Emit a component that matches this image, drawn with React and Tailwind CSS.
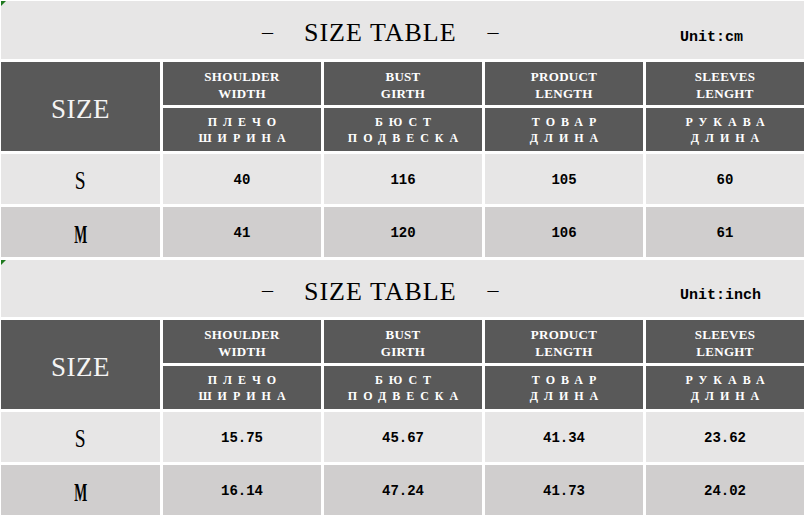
import React from "react";

const cols = [
  { en: ["SHOULDER", "WIDTH"], ru: ["ПЛЕЧО", "ШИРИНА"] },
  { en: ["BUST", "GIRTH"], ru: ["БЮСТ", "ПОДВЕСКА"] },
  { en: ["PRODUCT", "LENGTH"], ru: ["ТОВАР", "ДЛИНА"] },
  { en: ["SLEEVES", "LENGHT"], ru: ["РУКАВА", "ДЛИНА"] },
];

const tables = [
  { unit: "Unit:cm", h: "h-[58px]", s: ["40", "116", "105", "60"], m: ["41", "120", "106", "61"] },
  { unit: "Unit:inch", h: "h-[57px]", s: ["15.75", "45.67", "41.34", "23.62"], m: ["16.14", "47.24", "41.73", "24.02"] },
];

const mono = { fontFamily: '"Liberation Mono", monospace' };
const serif = { fontFamily: '"Liberation Serif", serif' };

function Title({ unit, h }) {
  return (
    <div className={`relative ${h} w-[803px] bg-[#e7e6e6] flex items-center`}>
      <span className="absolute left-0 top-0 w-0 h-0 border-t-[5px] border-r-[5px] border-t-[#1f7a1f] border-r-transparent" />
      <div className="w-[679px] flex items-center pl-[261px] pt-[6px] text-black" style={serif}>
        <span className="text-[22px] leading-none -mt-[3px]">–</span>
        <span className="ml-[31px] text-[26px] leading-none tracking-[1px]">SIZE TABLE</span>
        <span className="ml-[31px] text-[22px] leading-none -mt-[3px]">–</span>
      </div>
      <span className="mt-[14px] text-[15px] font-bold leading-none text-black" style={mono}>
        {unit}
      </span>
    </div>
  );
}

function Table({ t }) {
  return (
    <div className="grid grid-cols-[159px_158px_158px_158px_158px] grid-rows-[43px_43px_50px_50px] gap-[3px]">
      <div className="row-span-2 bg-[#595959] flex items-center justify-center">
        <span className="mt-[5px] text-[27px] leading-none tracking-[0.5px] text-[#f4f4f4]" style={serif}>
          SIZE
        </span>
      </div>
      {cols.map((c, i) => (
        <div key={"en" + i} className="bg-[#595959] flex flex-col items-center justify-center pt-[3px] text-white text-[13px] font-bold leading-[17.5px] tracking-[0.3px]" style={serif}>
          <span>{c.en[0]}</span>
          <span>{c.en[1]}</span>
        </div>
      ))}
      {cols.map((c, i) => (
        <div key={"ru" + i} className="bg-[#595959] flex flex-col items-center justify-center text-white text-[12px] font-bold leading-[16px] tracking-[6px] pl-[6px]" style={serif}>
          <span>{c.ru[0]}</span>
          <span>{c.ru[1]}</span>
        </div>
      ))}
      <div className="bg-[#e7e6e6] flex items-center justify-center">
        <span className="inline-block mt-[4px] text-[26px] leading-none text-black scale-x-[0.75]" style={serif}>S</span>
      </div>
      {t.s.map((v, i) => (
        <div key={"s" + i} className="bg-[#e7e6e6] flex items-center justify-center pt-[2px] text-[14px] font-bold text-black" style={mono}>
          {v}
        </div>
      ))}
      <div className="bg-[#d0cece] flex items-center justify-center">
        <span className="inline-block mt-[4px] text-[25px] font-bold leading-none text-black scale-x-[0.55]" style={serif}>M</span>
      </div>
      {t.m.map((v, i) => (
        <div key={"m" + i} className="bg-[#d0cece] flex items-center justify-center pt-[2px] text-[14px] font-bold text-black" style={mono}>
          {v}
        </div>
      ))}
    </div>
  );
}

export default function App() {
  return (
    <div className="w-[806px] h-[517px] bg-white pt-[1px] pl-[1px] flex flex-col gap-[3px] overflow-hidden">
      {tables.map((t, i) => (
        <React.Fragment key={i}>
          <Title unit={t.unit} h={t.h} />
          <Table t={t} />
        </React.Fragment>
      ))}
    </div>
  );
}
